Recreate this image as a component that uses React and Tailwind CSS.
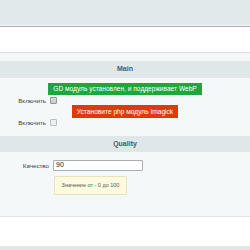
export default function App() {
  return (
    <div className="w-[250px] h-[250px] overflow-hidden bg-white font-['Liberation_Sans',Arial,sans-serif] text-[#333f46]">
      <div className="h-[25px] bg-[#e1e9eb]" />
      <div className="h-[1px] bg-[#f2f6f7]" />
      <div className="h-[1px] bg-[#a7afb1]" />
      <div className="h-[26px] bg-white border-b border-[#d6dcde]" />
      <div className="bg-[#f5f8f9] pt-[8px] pb-[21px] border-b border-[#dfe5e7]">
        <div className="h-[17px] bg-[#e0e7e9] flex items-center justify-center text-[7px] font-bold text-[#4b5a60]">
          Main
        </div>
        <div className="flex flex-col items-center mt-[5px]">
          <div className="h-[12px] px-[5px] bg-[#1ea73c] text-white text-[6.6px] flex items-center">
            GD модуль установлен, и поддерживает WebP
          </div>
        </div>
        <div className="flex items-center h-[9px] mt-[1px]">
          <div className="w-[50px] text-right pr-[4px] text-[6.2px]">Включить</div>
          <div className="w-[7px] h-[7px] rounded-[1px] border border-[#8e989c] bg-gradient-to-b from-[#d5dadc] to-[#c6ccce]" />
        </div>
        <div className="flex flex-col items-center">
          <div className="h-[13px] px-[5px] bg-[#dd3a0f] text-white text-[6.6px] flex items-center">
            Установите php модуль Imagick
          </div>
        </div>
        <div className="flex items-center h-[9px]">
          <div className="w-[50px] text-right pr-[4px] text-[6.2px]">Включить</div>
          <div className="w-[7px] h-[7px] rounded-[1px] border border-[#b9c0c3] bg-[#eceff0]" />
        </div>
        <div className="h-[16px] mt-[9px] bg-[#e0e7e9] flex items-center justify-center text-[7px] font-bold text-[#4b5a60]">
          Quality
        </div>
        <div className="flex items-center mt-[8px]">
          <div className="w-[53px] text-right pr-[4px] text-[6.2px]">Качество</div>
          <div className="w-[90px] h-[11px] bg-white border border-[#a6aeb1] rounded-[1px] flex items-center px-[2px] text-[7px] text-[#222]">
            90
          </div>
        </div>
        <div className="ml-[54px] mt-[5px] w-[73px] h-[19px] bg-[#fdfae0] border border-[#e9e3b8] rounded-[1px] flex items-center justify-center text-[5.5px] text-[#55595a]">
          Значение от - 0 до 100
        </div>
      </div>
      <div className="h-[29px] bg-white" />
      <div className="h-[4px] bg-[#dfe7e9]" />
    </div>
  );
}
